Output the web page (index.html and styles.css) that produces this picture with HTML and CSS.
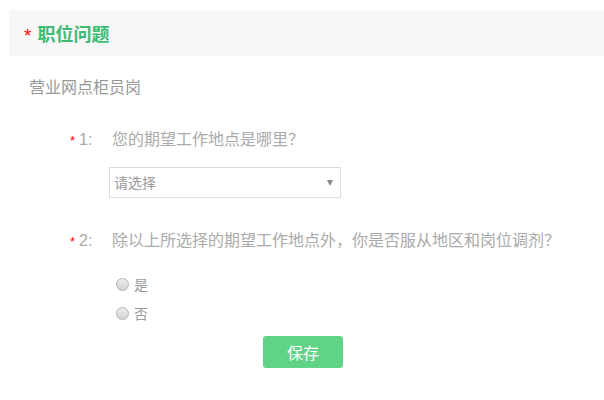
FILE: index.html
```html
<!DOCTYPE html>
<html lang="zh-CN">
  <head>
    <meta charset="UTF-8" />
    <meta name="viewport" content="width=device-width, initial-scale=1.0" />
    <title>职位问题</title>
    <link rel="stylesheet" href="styles.css">
  </head>

  <body>
    <article class="job">
      <h2 class="job-title"><span class="star">*</span>职位问题</h2>
      <p class="post">营业网点柜员岗</p>

      <div class="question">
        <span class="q-no"><span class="star">*</span>1:</span>
        <span class="q-text">您的期望工作地点是哪里？</span>
      </div>
      <div class="picker">
        <select class="picker-select">
          <option>请选择</option>
        </select>
      </div>

      <div class="question q-second">
        <span class="q-no"><span class="star">*</span>2:</span>
        <span class="q-text">除以上所选择的期望工作地点外，你是否服从地区和岗位调剂？</span>
      </div>
      <div class="options">
        <label class="option"><input type="radio" name="adjust" /> 是</label>
        <label class="option"><input type="radio" name="adjust" /> 否</label>
      </div>

      <div class="actions">
        <button type="button" class="save">保存</button>
      </div>
    </article>
  </body>
</html>
```

FILE: styles.css
```css
body {
  margin: 0;
  font-family: "Liberation Sans", "Noto Sans CJK SC", sans-serif;
  color: #aaa;
  background: #fff;
}

.job {
  padding-top: 10px;
}

.job-title {
  display: flex;
  align-items: center;
  height: 46px;
  margin: 0 0 0 9px;
  padding-left: 15px;
  background: #f7f7f7;
  font-size: 18px;
  font-weight: bold;
  color: #40ba72;
}

.job-title .star {
  margin-right: 6px;
  font-size: 19px;
  font-weight: normal;
  color: #f00;
  position: relative;
  top: 3px;
}

.post {
  margin: 20px 0 0 29px;
  font-size: 16px;
  line-height: 24px;
  color: #999;
}

.question {
  display: flex;
  margin: 28px 0 0 70px;
  font-size: 16px;
  line-height: 24px;
}

.q-second {
  margin-top: 31px;
}

.q-no {
  width: 42px;
  flex-shrink: 0;
}

.q-no .star {
  margin-right: 4px;
  font-size: 13px;
  color: #f00;
}

.picker {
  position: relative;
  width: 232px;
  margin: 14px 0 0 109px;
}

.picker-select {
  appearance: none;
  display: block;
  width: 100%;
  height: 31px;
  padding: 0 0 0 4px;
  border: 1px solid #ddd;
  background: #fff;
  font-family: inherit;
  font-size: 14px;
  color: #999;
}

.picker::after {
  content: "";
  position: absolute;
  right: 8px;
  top: 13px;
  border-left: 3px solid transparent;
  border-right: 3px solid transparent;
  border-top: 6px solid #888;
}

.options {
  margin: 18px 0 0 116px;
}

.option {
  display: flex;
  align-items: center;
  height: 24px;
  margin-bottom: 5px;
  font-size: 14px;
  color: #999;
}

.option input {
  appearance: none;
  width: 13px;
  height: 13px;
  margin: 0 5px 0 0;
  border: 1px solid #b4b4b4;
  border-radius: 50%;
  background: linear-gradient(#eee, #d2d2d2);
}

.actions {
  display: flex;
  justify-content: center;
  margin-top: 11px;
  padding-left: 2px;
}

.save {
  width: 80px;
  height: 32px;
  border: none;
  border-radius: 3px;
  background: #61d386;
  font-family: inherit;
  font-size: 16px;
  color: #fff;
}
```
